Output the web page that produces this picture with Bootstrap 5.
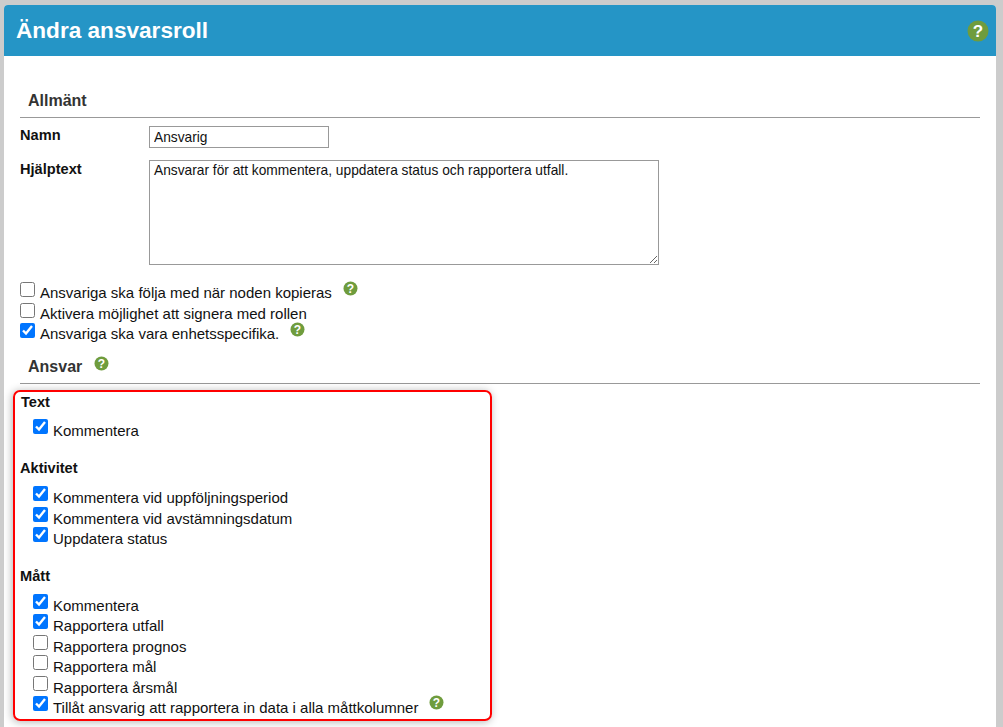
<!DOCTYPE html>
<html lang="sv">
<head>
<meta charset="utf-8">
<title>Ändra ansvarsroll</title>
<link href="https://cdn.jsdelivr.net/npm/bootstrap@5.3.0/dist/css/bootstrap.min.css" rel="stylesheet">
<style>
html,body{height:100%;overflow:hidden}
body{background:#ccc;font-family:"Liberation Sans",Arial,sans-serif;font-size:14.6px;line-height:20px;color:#111;padding:5px 7px 0 4px}
.sheet{background:#fff;height:740px;border-radius:4px 4px 0 0}
.sheet-head{background:#2595c6;height:51px;padding:0 7px 0 12px;border-radius:4px 4px 0 0}
.sheet-head h1{font-size:22.6px;font-weight:700;color:#fff;margin:0;line-height:48px}
.sheet-body{padding:32px 16px 0 16px}
.sect{border-bottom:1px solid #999;padding:0 0 0 8px;height:30px;font-size:16px;font-weight:700;color:#333;line-height:26px}
.sect-b{height:36px;line-height:38px;margin-top:2px}
.field-name{width:129px;font-weight:700;flex:none;line-height:18px}
.txt{border:1px solid #999;padding:0 4px;font:13.75px/20px "Liberation Sans",Arial,sans-serif;color:#111;border-radius:0;outline:0;display:block}
.txt-in{width:180px;height:22px}
.txt-ar{width:510px;height:105px;padding-top:0}
.chk{width:15px;height:15px;margin:0 5px 0 0;flex:none;accent-color:#0075ff;position:relative;top:-3px}
.opt{display:flex;align-items:flex-start;height:20.5px;line-height:20px;padding-top:1px;white-space:nowrap;font-size:15px}
.opt label{position:relative;top:-1px}
.opts-top .opt label{top:-2px}
.qm{display:inline-block;flex:none;vertical-align:top;width:15px;height:15px}
.qm-top{width:22px;height:22px}
.qm-row{margin-left:11px;margin-top:-4px}
.redbox{width:479px;height:331px;margin:6px 0 0 -7px;border:2px solid #f00;border-radius:7px;box-shadow:-1px 1px 8px rgba(0,0,0,.3);padding:1px 0 0 5px}
.grp{font-weight:700;color:#111;line-height:18px;height:18px}
.grp-first{padding-left:1px}
.lst{padding-left:13px;margin-top:11px}
.lst-first{margin-top:10px}
.grp-next{margin-top:17px}
.grp-after{margin-top:18px}
</style>
</head>
<body>
<div class="sheet">
  <div class="sheet-head d-flex align-items-center justify-content-between">
    <h1>Ändra ansvarsroll</h1>
    <svg class="qm-top" viewBox="0 0 22 22"><circle cx="11" cy="11" r="10.5" fill="#6f9c3d"/><text x="11" y="17" text-anchor="middle" font-family="Liberation Sans" font-weight="700" font-size="17" fill="#fff">?</text></svg>
  </div>
  <div class="sheet-body">
    <div class="sect">Allmänt</div>
    <div class="d-flex mt-2">
      <div class="field-name">Namn</div>
      <input class="txt txt-in" type="text" value="Ansvarig">
    </div>
    <div class="d-flex" style="margin-top:12px">
      <div class="field-name">Hjälptext</div>
      <textarea class="txt txt-ar">Ansvarar för att kommentera, uppdatera status och rapportera utfall.</textarea>
    </div>
    <div class="opts-top" style="margin-top:19px">
      <div class="opt"><input class="chk" type="checkbox" id="a1"><label for="a1">Ansvariga ska följa med när noden kopieras</label><svg class="qm qm-row" viewBox="0 0 15 15"><circle cx="7.5" cy="7.5" r="7" fill="#6f9c3d"/><text x="7.5" y="12" text-anchor="middle" font-family="Liberation Sans" font-weight="700" font-size="12" fill="#fff">?</text></svg></div>
      <div class="opt"><input class="chk" type="checkbox" id="a2"><label for="a2">Aktivera möjlighet att signera med rollen</label></div>
      <div class="opt"><input class="chk" type="checkbox" id="a3" checked><label for="a3">Ansvariga ska vara enhetsspecifika.</label><svg class="qm qm-row" viewBox="0 0 15 15"><circle cx="7.5" cy="7.5" r="7" fill="#6f9c3d"/><text x="7.5" y="12" text-anchor="middle" font-family="Liberation Sans" font-weight="700" font-size="12" fill="#fff">?</text></svg></div>
    </div>
    <div class="sect sect-b">Ansvar <svg class="qm" style="margin-left:7px;margin-top:8px" viewBox="0 0 15 15"><circle cx="7.5" cy="7.5" r="7" fill="#6f9c3d"/><text x="7.5" y="12" text-anchor="middle" font-family="Liberation Sans" font-weight="700" font-size="12" fill="#fff">?</text></svg></div>
    <div class="redbox">
      <div class="grp grp-first">Text</div>
      <div class="lst lst-first">
        <div class="opt"><input class="chk" type="checkbox" id="b1" checked><label for="b1">Kommentera</label></div>
      </div>
      <div class="grp grp-after">Aktivitet</div>
      <div class="lst">
        <div class="opt"><input class="chk" type="checkbox" id="c1" checked><label for="c1">Kommentera vid uppföljningsperiod</label></div>
        <div class="opt"><input class="chk" type="checkbox" id="c2" checked><label for="c2">Kommentera vid avstämningsdatum</label></div>
        <div class="opt"><input class="chk" type="checkbox" id="c3" checked><label for="c3">Uppdatera status</label></div>
      </div>
      <div class="grp grp-next">Mått</div>
      <div class="lst">
        <div class="opt"><input class="chk" type="checkbox" id="d1" checked><label for="d1">Kommentera</label></div>
        <div class="opt"><input class="chk" type="checkbox" id="d2" checked><label for="d2">Rapportera utfall</label></div>
        <div class="opt"><input class="chk" type="checkbox" id="d3"><label for="d3">Rapportera prognos</label></div>
        <div class="opt"><input class="chk" type="checkbox" id="d4"><label for="d4">Rapportera mål</label></div>
        <div class="opt"><input class="chk" type="checkbox" id="d5"><label for="d5">Rapportera årsmål</label></div>
        <div class="opt"><input class="chk" type="checkbox" id="d6" checked><label for="d6">Tillåt ansvarig att rapportera in data i alla måttkolumner</label><svg class="qm qm-row" viewBox="0 0 15 15"><circle cx="7.5" cy="7.5" r="7" fill="#6f9c3d"/><text x="7.5" y="12" text-anchor="middle" font-family="Liberation Sans" font-weight="700" font-size="12" fill="#fff">?</text></svg></div>
      </div>
    </div>
  </div>
</div>
<script src="https://cdn.jsdelivr.net/npm/bootstrap@5.3.0/dist/js/bootstrap.bundle.min.js"></script>
</body>
</html>
